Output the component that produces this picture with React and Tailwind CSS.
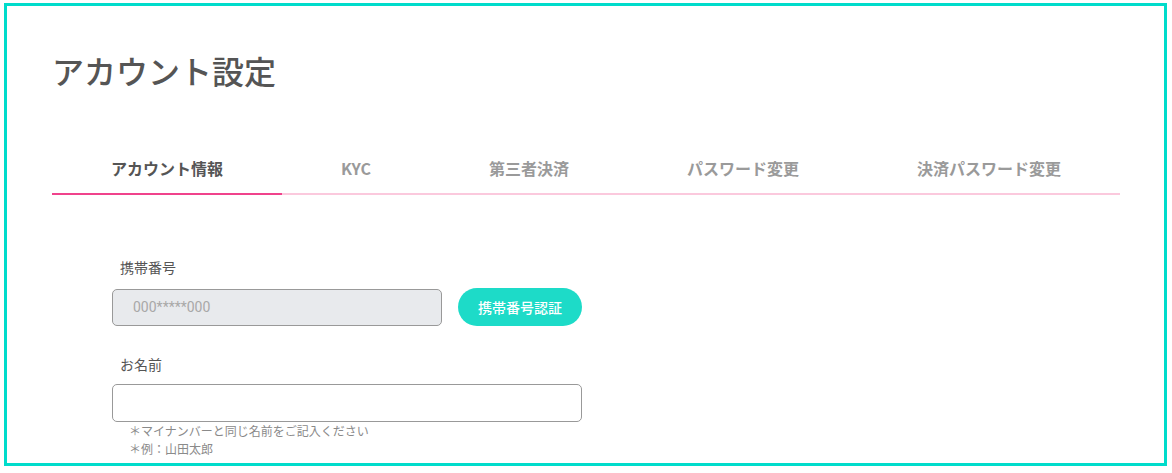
export default function App() {
  const tabs = ["アカウント情報", "KYC", "第三者決済", "パスワード変更", "決済パスワード変更"];
  const font = { fontFamily: '"Noto Sans CJK JP", "Noto Sans", sans-serif' };
  return (
    <div className="w-[1172px] h-[473px] bg-white pt-[3px] pl-[4px] pr-[5px]" style={font}>
      <div className="h-[463px] border-[3px] border-[#00dccb] overflow-hidden">
        <div className="pl-[45px] pr-[44px]">
          <h1 className="mt-[40px] text-[32px] leading-[48px] font-medium text-[#555555]">アカウント設定</h1>
          <div className="mt-[62px] flex">
            {tabs.map((t, i) => (
              <div
                key={t}
                className={
                  "flex-auto text-center text-[16px] leading-[24px] font-bold pb-[13px] border-b-2 " +
                  (i === 0 ? "text-[#555555] border-[#f0438c]" : "text-[#9a9a9a] border-[#fbc9dd]")
                }
              >
                {t}
              </div>
            ))}
          </div>
          <div className="pl-[60px] pt-[62px]">
            <div className="text-[14px] leading-[20px] text-[#555555] pl-[8px]">携帯番号</div>
            <div className="mt-[11px] flex items-center gap-[16px]">
              <div className="w-[330px] h-[37px] bg-[#e8eaed] border border-[#999999] rounded-[5px] flex items-center pl-[20px] text-[14px] text-[#a8a8a8]" style={{ fontFamily: 'Roboto, "Liberation Sans", sans-serif' }}>
                000*****000
              </div>
              <button className="w-[124px] h-[38px] rounded-full bg-[#1ddbc8] text-white text-[14px] font-medium">
                携帯番号認証
              </button>
            </div>
            <div className="mt-[28px] text-[14px] leading-[20px] text-[#555555] pl-[8px]">お名前</div>
            <div className="mt-[10px] w-[470px] h-[38px] bg-white border border-[#999999] rounded-[5px]"></div>
            <div className="pl-[17px] mt-0 text-[12px] leading-[18px] text-[#8a8a8a]">
              <div>＊マイナンバーと同じ名前をご記入ください</div>
              <div>＊例：山田太郎</div>
            </div>
          </div>
        </div>
      </div>
    </div>
  );
}
